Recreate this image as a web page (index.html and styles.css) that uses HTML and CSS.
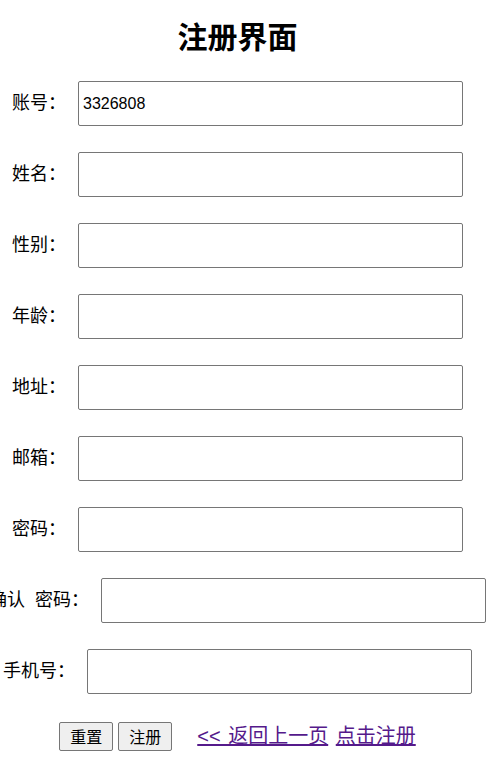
FILE: index.html
```html
<!DOCTYPE html>
<html lang="zh-CN">
<head>
<meta charset="utf-8">
<title>注册界面</title>
<link rel="stylesheet" href="styles.css">
</head>
<body>
<main class="page">
  <h1 class="title">注册界面</h1>
  <form class="form">
    <div class="row"><label class="label">账号：</label><input class="field" type="text" value="3326808"></div>
    <div class="row"><label class="label">姓名：</label><input class="field" type="text"></div>
    <div class="row"><label class="label">性别：</label><input class="field" type="text"></div>
    <div class="row"><label class="label">年龄：</label><input class="field" type="text"></div>
    <div class="row"><label class="label">地址：</label><input class="field" type="text"></div>
    <div class="row"><label class="label">邮箱：</label><input class="field" type="text"></div>
    <div class="row"><label class="label">密码：</label><input class="field" type="password"></div>
    <div class="row"><label class="label label-wide">确认 密码：</label><input class="field" type="password"></div>
    <div class="row"><label class="label">手机号：</label><input class="field" type="text"></div>
    <div class="actions">
      <button class="btn" type="reset">重置</button>
      <button class="btn" type="button">注册</button>
      <span class="links"><a class="link" href="#">&lt;&lt; 返回上一页</a> <a class="link" href="#">点击注册</a></span>
    </div>
  </form>
</main>
</body>
</html>
```
FILE: styles.css
```css
html, body {
  overflow-x: hidden;
}
body {
  margin: 0;
  background: #ffffff;
  color: #000000;
  font-family: "Liberation Sans", "Noto Sans CJK SC", sans-serif;
}
.page {
  padding: 0 11px 0 0;
  display: flex;
  flex-direction: column;
  gap: 26px;
}
.title {
  margin: 21px 0 0 0;
  font-size: 30px;
  line-height: 34px;
  font-weight: 700;
  text-align: center;
}
.form {
  display: flex;
  flex-direction: column;
  gap: 26px;
  margin: 0;
}
.row {
  display: flex;
  justify-content: center;
  align-items: baseline;
  gap: 12px;
}
.label {
  font-size: 18px;
  white-space: nowrap;
  flex: none;
}
.label-wide {
  word-spacing: 5px;
}
.field {
  flex: none;
  box-sizing: border-box;
  width: 385px;
  height: 45px;
  margin: 0;
  padding: 0 4px;
  border: 1px solid #767676;
  border-radius: 2px;
  font-family: "Liberation Sans", "Noto Sans CJK SC", sans-serif;
  font-size: 16px;
  color: #000000;
  background: #ffffff;
}
.actions {
  display: flex;
  justify-content: center;
  align-items: baseline;
  gap: 5px;
}
.btn {
  box-sizing: border-box;
  height: 29px;
  margin: 0;
  padding: 0 10px;
  border: 1px solid #767676;
  border-radius: 2px;
  background: #efefef;
  color: #000000;
  font-family: "Liberation Sans", "Noto Sans CJK SC", sans-serif;
  font-size: 16px;
}
.links {
  margin-left: 20px;
  font-size: 20px;
  word-spacing: 2px;
  white-space: nowrap;
}
.link {
  color: #551a8b;
}
```
